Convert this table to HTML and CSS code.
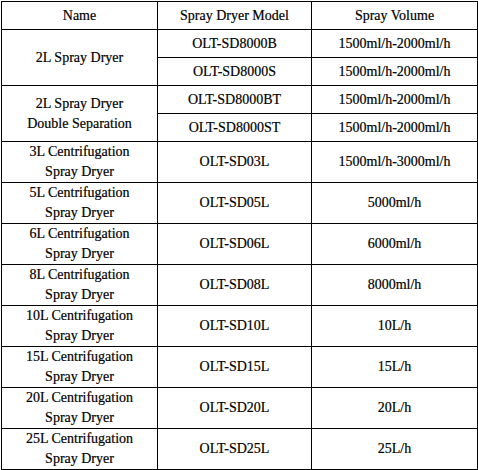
FILE: index.html
```html
<!DOCTYPE html>
<html>
<head>
<meta charset="utf-8">
<link rel="stylesheet" href="styles.css">
</head>
<body>
<table class="spec">
  <colgroup>
    <col class="c-name">
    <col class="c-model">
    <col class="c-vol">
  </colgroup>
  <tr class="r-short">
    <td>Name</td><td>Spray Dryer Model</td><td>Spray Volume</td>
  </tr>
  <tr class="r-short">
    <td rowspan="2">2L Spray Dryer</td><td>OLT-SD8000B</td><td>1500ml/h-2000ml/h</td>
  </tr>
  <tr class="r-short">
    <td>OLT-SD8000S</td><td>1500ml/h-2000ml/h</td>
  </tr>
  <tr class="r-short">
    <td rowspan="2">2L Spray Dryer<br>Double Separation</td><td>OLT-SD8000BT</td><td>1500ml/h-2000ml/h</td>
  </tr>
  <tr class="r-short">
    <td>OLT-SD8000ST</td><td>1500ml/h-2000ml/h</td>
  </tr>
  <tr class="r-tall">
    <td>3L Centrifugation<br>Spray Dryer</td><td>OLT-SD03L</td><td>1500ml/h-3000ml/h</td>
  </tr>
  <tr class="r-tall">
    <td>5L Centrifugation<br>Spray Dryer</td><td>OLT-SD05L</td><td>5000ml/h</td>
  </tr>
  <tr class="r-tall">
    <td>6L Centrifugation<br>Spray Dryer</td><td>OLT-SD06L</td><td>6000ml/h</td>
  </tr>
  <tr class="r-tall">
    <td>8L Centrifugation<br>Spray Dryer</td><td>OLT-SD08L</td><td>8000ml/h</td>
  </tr>
  <tr class="r-tall">
    <td>10L Centrifugation<br>Spray Dryer</td><td>OLT-SD10L</td><td>10L/h</td>
  </tr>
  <tr class="r-tall">
    <td>15L Centrifugation<br>Spray Dryer</td><td>OLT-SD15L</td><td>15L/h</td>
  </tr>
  <tr class="r-tall">
    <td>20L Centrifugation<br>Spray Dryer</td><td>OLT-SD20L</td><td>20L/h</td>
  </tr>
  <tr class="r-tall">
    <td>25L Centrifugation<br>Spray Dryer</td><td>OLT-SD25L</td><td>25L/h</td>
  </tr>
</table>
</body>
</html>
```
FILE: styles.css
```css
html, body {
  margin: 0;
  padding: 0;
  background: #fff;
}
body {
  padding: 1px 0 0 1px;
  font-family: "Liberation Serif", "Times New Roman", serif;
  font-size: 14px;
  color: #000;
}
.spec {
  border-collapse: collapse;
  table-layout: fixed;
  width: 476px;
}
.c-name { width: 156px; }
.c-model { width: 154px; }
.c-vol { width: 166px; }
.spec td {
  border: 1px solid #000;
  text-align: center;
  vertical-align: middle;
  padding: 0;
  line-height: 20px;
  -webkit-text-stroke: 0.2px #000;
}
.r-short td { height: 27px; }
.r-tall td { height: 40px; }
```
